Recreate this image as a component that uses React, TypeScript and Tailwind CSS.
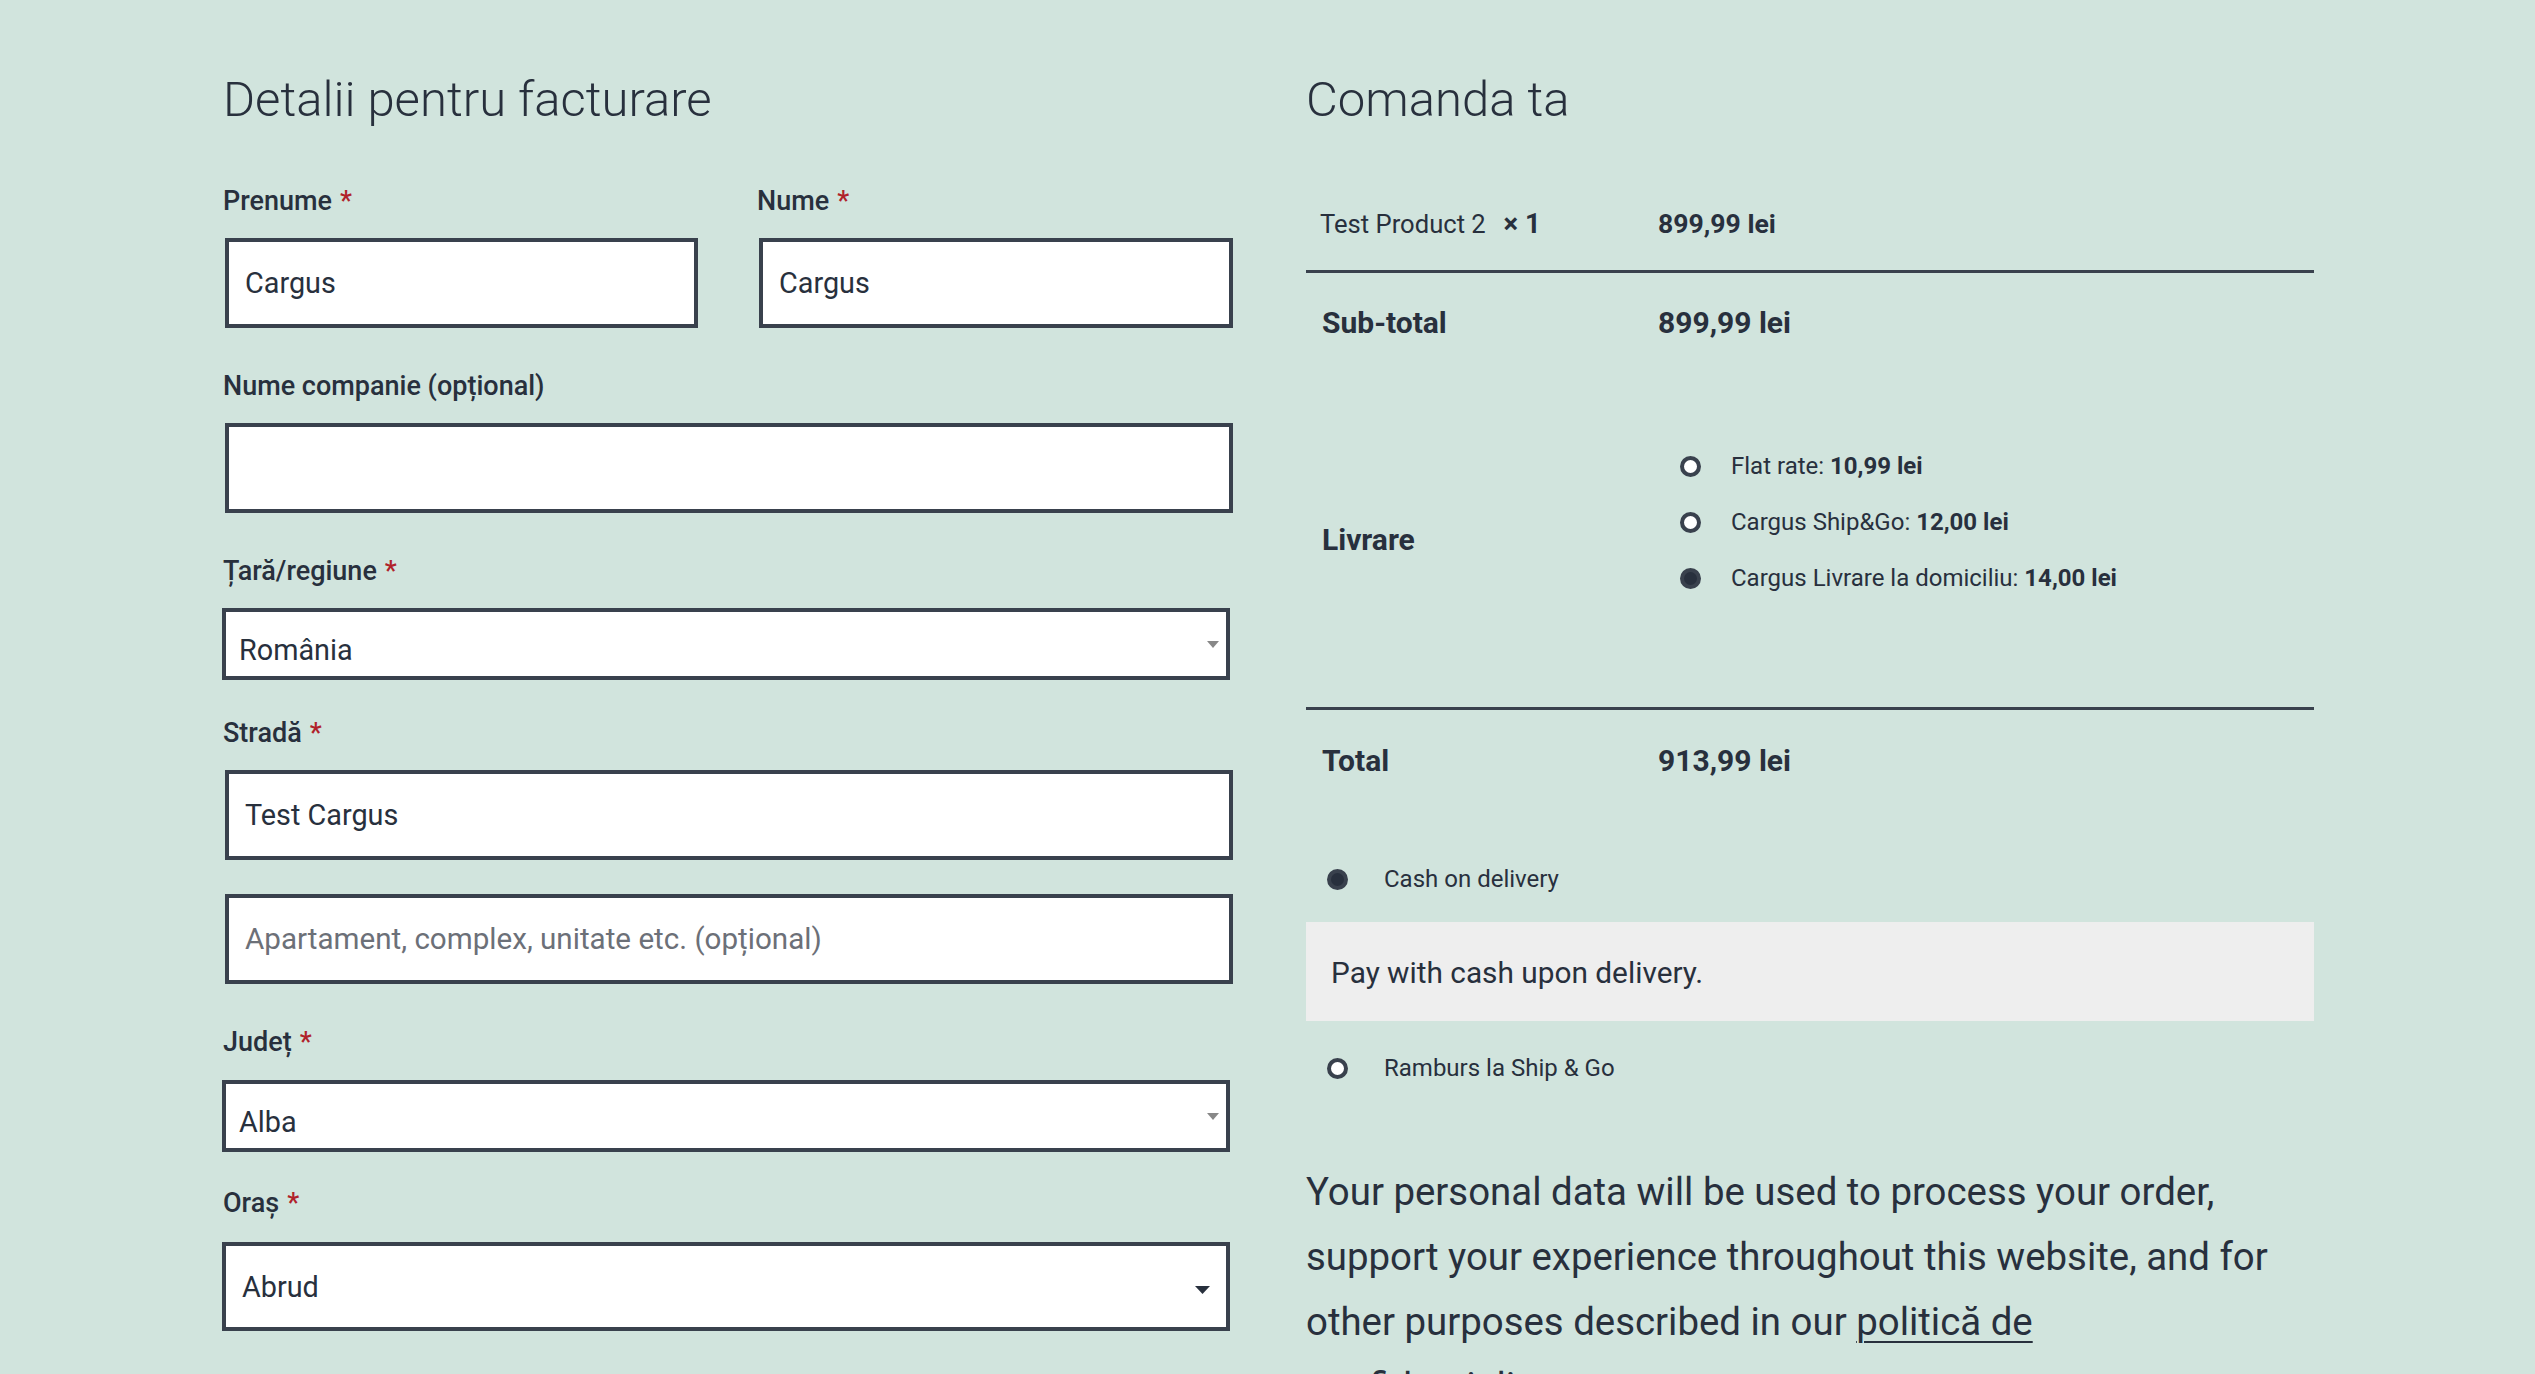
import React from "react";

const Req = () => <span className="text-[#b0222a] ml-[8px]">*</span>;

function Label({ children, req = true }: { children: React.ReactNode; req?: boolean }) {
  return (
    <label className="block h-[32px] leading-[32px] text-[27px] font-medium whitespace-nowrap">
      {children}
      {req && <Req />}
    </label>
  );
}

function TextInput({ value, placeholder, w }: { value?: string; placeholder?: string; w: string }) {
  return (
    <input
      readOnly
      defaultValue={value}
      placeholder={placeholder}
      className={`${w} ml-[2px] block h-[90px] border-4 border-[#39414d] bg-white px-[16px] text-[28.8px] text-[#28303d] outline-none placeholder:text-[29.6px] placeholder:text-[#6c7078]`}
    />
  );
}

function SmallSelect({ value }: { value: string }) {
  return (
    <div className="relative -ml-px h-[72px] w-[1008px] border-4 border-[#39414d] bg-white pl-[13px] pt-[21px] text-[28.8px] leading-[34px]">
      {value}
      <svg className="absolute right-[7px] top-[29px]" width="12" height="7" viewBox="0 0 12 7">
        <path d="M0 0 L12 0 L6 7 Z" fill="#888888" />
      </svg>
    </div>
  );
}

function Radio({ checked }: { checked?: boolean }) {
  return (
    <span
      className={`inline-block h-[21px] w-[21px] shrink-0 rounded-full border-4 border-[#39414d] ${
        checked ? "bg-[#28303d]" : "bg-white"
      }`}
    />
  );
}

export default function App() {
  return (
    <div className="min-h-screen bg-[#d1e4dd] text-[#28303d] font-['Roboto',sans-serif]">
      <div className="ml-[223px] flex gap-[74px] pt-[70px]">
        {/* Left column */}
        <div className="w-[1009px] shrink-0">
          <h3 className="mb-[55px] h-[60px] text-[49px] font-light leading-[60px]">Detalii pentru facturare</h3>

          <div className="grid grid-cols-2 gap-x-[59px]">
            <div>
              <Label>Prenume</Label>
              <div className="mt-[21px]">
                <TextInput value="Cargus" w="w-[473px]" />
              </div>
            </div>
            <div>
              <Label>Nume</Label>
              <div className="mt-[21px]">
                <TextInput value="Cargus" w="w-[474px]" />
              </div>
            </div>
          </div>

          <div className="mt-[42px]">
            <Label req={false}>Nume companie (opțional)</Label>
            <div className="mt-[21px]">
              <TextInput w="w-[1008px]" />
            </div>
          </div>

          <div className="mt-[42px]">
            <Label>Țară/regiune</Label>
            <div className="mt-[21px]">
              <SmallSelect value="România" />
            </div>
          </div>

          <div className="mt-[37px]">
            <Label>Stradă</Label>
            <div className="mt-[21px]">
              <TextInput value="Test Cargus" w="w-[1008px]" />
            </div>
            <div className="mt-[34px]">
              <TextInput placeholder="Apartament, complex, unitate etc. (opțional)" w="w-[1008px]" />
            </div>
          </div>

          <div className="mt-[42px]">
            <Label>Județ</Label>
            <div className="mt-[22px]">
              <SmallSelect value="Alba" />
            </div>
          </div>

          <div className="mt-[35px]">
            <Label>Oraș</Label>
            <div className="mt-[23px]">
              <div className="relative -ml-px flex h-[89px] w-[1008px] items-center border-4 border-[#39414d] bg-white pl-[16px] text-[28.8px] leading-[34px]">
                Abrud
                <svg className="absolute right-[16px] top-[40px]" width="15" height="8" viewBox="0 0 15 8">
                  <path d="M0 0 L15 0 L7.5 8 Z" fill="#28303d" />
                </svg>
              </div>
            </div>
          </div>
          <div className="h-[120px]" />
        </div>

        {/* Right column */}
        <div className="w-[1008px] shrink-0">
          <h3 className="mb-[48px] h-[60px] text-[49px] font-light leading-[60px]">Comanda ta</h3>

          {/* product row */}
          <div className="flex border-b-[3px] border-[#39414d] pb-[30px] pt-[30px] leading-[32px]">
            <div className="w-[352px] shrink-0 pl-[14px] text-[25.6px] font-normal">
              Test Product 2&nbsp; <strong className="ml-[5px] text-[27.5px] font-bold">×&nbsp;1</strong>
            </div>
            <div className="text-[26.6px] font-bold">899,99 lei</div>
          </div>

          {/* subtotal */}
          <div className="flex pb-[32px] pt-[32px] text-[30px] font-bold leading-[36px]">
            <div className="w-[352px] shrink-0 pl-[16px]">Sub-total</div>
            <div>899,99 lei</div>
          </div>

          {/* shipping */}
          <div className="flex h-[337px] border-b-[3px] border-[#39414d]">
            <div className="flex w-[352px] shrink-0 items-center pl-[16px] text-[30px] font-bold leading-[36px]">
              Livrare
            </div>
            <ul className="pl-[22px] pt-[65px] text-[24px]">
              <li className="flex h-[56px] items-center gap-[30px]">
                <Radio />
                <span>
                  Flat rate: <span className="font-bold">10,99 lei</span>
                </span>
              </li>
              <li className="flex h-[56px] items-center gap-[30px]">
                <Radio />
                <span>
                  Cargus Ship&amp;Go: <span className="font-bold">12,00 lei</span>
                </span>
              </li>
              <li className="flex h-[56px] items-center gap-[30px]">
                <Radio checked />
                <span>
                  Cargus Livrare la domiciliu: <span className="font-bold">14,00 lei</span>
                </span>
              </li>
            </ul>
          </div>

          {/* total */}
          <div className="flex pb-[32px] pt-[33px] text-[30px] font-bold leading-[36px]">
            <div className="w-[352px] shrink-0 pl-[16px]">Total</div>
            <div>913,99 lei</div>
          </div>

          {/* payment */}
          <div className="mt-[48px] flex h-[40px] items-center gap-[36px] pl-[21px] text-[24px]">
            <Radio checked />
            <span>Cash on delivery</span>
          </div>
          <div className="mt-[23px] h-[99px] bg-[#eeeeee] pl-[25px] pt-[33px] text-[29.8px] leading-[36px]">
            Pay with cash upon delivery.
          </div>
          <div className="mt-[27px] flex h-[40px] items-center gap-[36px] pl-[21px] text-[24px]">
            <Radio />
            <span>Ramburs la Ship &amp; Go</span>
          </div>

          <p className="mt-[71px] w-[990px] text-[38.4px] font-normal leading-[65px]">
            Your personal data will be used to process your order, support your experience throughout this website, and
            for other purposes described in our{" "}
            <a className="underline decoration-[2px] underline-offset-[6px]" href="#">
              politică de confidențialitate
            </a>
            .
          </p>
        </div>
      </div>
    </div>
  );
}
